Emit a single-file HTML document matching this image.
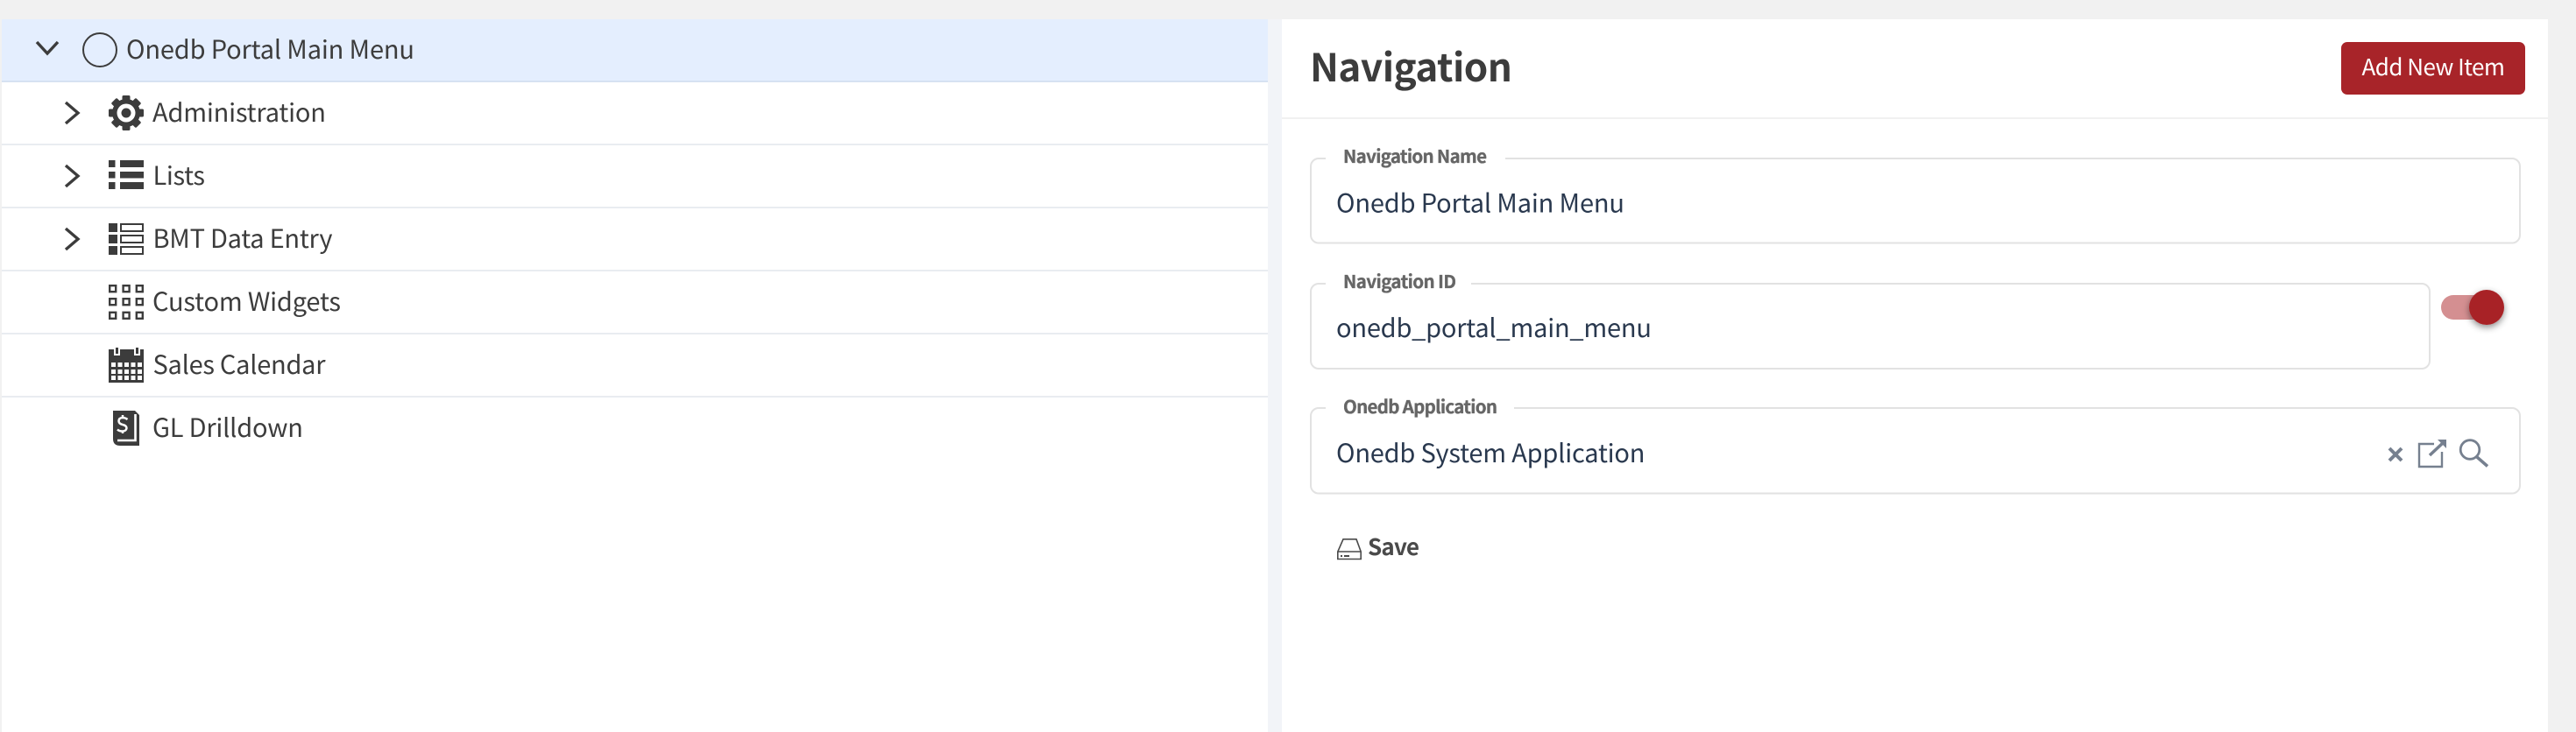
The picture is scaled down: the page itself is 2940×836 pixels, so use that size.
<!DOCTYPE html>
<html lang="en"><head><meta charset="utf-8"><title>Navigation</title>
<style>
html,body{margin:0;padding:0;width:2940px;height:836px;overflow:hidden;background:#f1f1f1}
svg{display:block}
text{font-family:"Noto Sans CJK JP","Liberation Sans",sans-serif;font-kerning:normal}
.m{font-size:29px;fill:#3c3c3c}
.v{font-size:29px;fill:#29384e}
.l{font-size:20.5px;font-weight:700;fill:#666;stroke:#666;stroke-width:.35px}
</style></head><body>
<svg xmlns="http://www.w3.org/2000/svg" width="2940" height="836" viewBox="0 0 2940 836">
<!-- panels -->
<rect x="2" y="22" width="1445" height="814" fill="#fff"/>
<rect x="1447" y="22" width="16" height="814" fill="#f2f4f8"/>
<rect x="1463" y="22" width="1445" height="814" fill="#fff"/>
<!-- tree rows -->
<rect x="2" y="22" width="1445" height="72" fill="#e4eefe"/>
<rect x="2" y="92" width="1445" height="2" fill="#d6e2f2"/>
<g fill="#e9ecf1">
<rect x="2" y="164" width="1445" height="2"/><rect x="2" y="236" width="1445" height="2"/>
<rect x="2" y="308" width="1445" height="2"/><rect x="2" y="380" width="1445" height="2"/>
<rect x="2" y="452" width="1445" height="2"/>
</g>
<!-- chevrons -->
<g fill="none" stroke="#3c3c3c" stroke-width="3.4">
<path d="M42 48 54 61 66 48"/>
<path d="M75 117 89 129 75 141"/>
<path d="M75 189 89 201 75 213"/>
<path d="M75 261 89 273 75 285"/>
</g>
<circle cx="114" cy="57" r="19" fill="none" stroke="#3c3c3c" stroke-width="2"/>
<!-- gear -->
<g fill="#3c3c3c" transform="translate(144 129)">
<circle r="16"/>
<rect x="-4.5" y="-20" width="9" height="40" rx="1.5"/>
<rect x="-4.5" y="-20" width="9" height="40" rx="1.5" transform="rotate(45)"/>
<rect x="-4.5" y="-20" width="9" height="40" rx="1.5" transform="rotate(90)"/>
<rect x="-4.5" y="-20" width="9" height="40" rx="1.5" transform="rotate(135)"/>
<circle r="10.5" fill="#fff"/><circle r="5.5"/>
</g>
<!-- list -->
<g fill="#3c3c3c">
<rect x="124" y="183" width="7.5" height="8"/><rect x="137" y="183" width="27" height="8"/>
<rect x="124" y="196" width="7.5" height="7.5"/><rect x="137" y="196" width="27" height="7.5"/>
<rect x="124" y="208" width="7.5" height="8"/><rect x="137" y="208" width="27" height="8"/>
</g>
<!-- table list -->
<g fill="#3c3c3c">
<rect x="124" y="255" width="10" height="10"/><rect x="124" y="268" width="10" height="10"/><rect x="124" y="281" width="10" height="10"/>
</g>
<g fill="none" stroke="#3c3c3c" stroke-width="2">
<rect x="138" y="256" width="25" height="8"/><rect x="138" y="269" width="25" height="8"/><rect x="138" y="282" width="25" height="8"/>
</g>
<!-- widgets -->
<g fill="none" stroke="#3c3c3c" stroke-width="2.4">
<rect x="125.2" y="326.2" width="7" height="7"/><rect x="140.6" y="326.2" width="7" height="7"/><rect x="155.800" y="326.2" width="7" height="7"/>
<rect x="125.2" y="341.2" width="7" height="7"/><rect x="140.6" y="341.2" width="7" height="7"/><rect x="155.800" y="341.2" width="7" height="7"/>
<rect x="125.2" y="356.800" width="7" height="7"/><rect x="140.6" y="356.800" width="7" height="7"/><rect x="155.800" y="356.800" width="7" height="7"/>
</g>
<!-- calendar -->
<rect x="124" y="399" width="40" height="38" fill="#3c3c3c"/>
<g fill="#fff">
<rect x="130" y="397" width="2" height="9"/><rect x="130" y="404" width="7" height="2"/><rect x="135" y="397" width="2" height="9"/>
<rect x="153" y="397" width="2" height="9"/><rect x="153" y="404" width="7" height="2"/><rect x="158" y="397" width="2" height="9"/>
<rect x="127" y="414" width="5" height="5"/><rect x="134.5" y="414" width="5" height="5"/><rect x="142" y="414" width="5" height="5"/><rect x="149.5" y="414" width="5" height="5"/><rect x="157" y="414" width="5" height="5"/>
<rect x="127" y="422" width="5" height="5"/><rect x="134.5" y="422" width="5" height="5"/><rect x="142" y="422" width="5" height="5"/><rect x="149.5" y="422" width="5" height="5"/><rect x="157" y="422" width="5" height="5"/>
<rect x="127" y="429" width="5" height="5"/><rect x="134.5" y="429" width="5" height="5"/><rect x="142" y="429" width="5" height="5"/><rect x="149.5" y="429" width="5" height="5"/><rect x="157" y="429" width="5" height="5"/>
</g>
<rect x="132" y="397" width="3" height="7" fill="#3c3c3c"/><rect x="155" y="397" width="3" height="7" fill="#3c3c3c"/>
<!-- document -->
<path d="M129 469H154L159 474V509H137Q129 509 129 501Z" fill="#3c3c3c"/>
<path d="M134 503H154.5V473" fill="none" stroke="#fff" stroke-width="2.6"/>
<path d="M145.500 479Q143 477 139.500 477Q135.500 477.500 135.500 481Q135.800 484 140 485Q144.500 486 144.500 489Q144 492.500 139.500 492.500Q136 492.500 134 490.500M140 474V477M140 492.500V495" fill="none" stroke="#fff" stroke-width="2.500"/>
<!-- tree labels -->
<text class="m" x="144" y="67" textLength="329">Onedb Portal Main Menu</text>
<text class="m" x="174" y="139" textLength="198">Administration</text>
<text class="m" x="174.500" y="211" textLength="59.500">Lists</text>
<text class="m" x="174.500" y="283" textLength="205">BMT Data Entry</text>
<text class="m" x="174" y="355" textLength="215">Custom Widgets</text>
<text class="m" x="174.500" y="427" textLength="197">Sales Calendar</text>
<text class="m" x="174" y="499" textLength="172">GL Drilldown</text>
<!-- right header -->
<rect x="1463" y="134" width="1445" height="2" fill="#f1f1f1"/>
<text x="1495" y="93" textLength="231" font-size="44" font-weight="700" fill="#3c3c3c">Navigation</text>
<rect x="2672" y="48" width="210" height="60" rx="7" fill="#a82429"/>
<text x="2695.500" y="86" textLength="163.500" font-size="26" fill="#fff">Add New Item</text>
<!-- fields -->
<g fill="#fff" stroke="#e2e2e2" stroke-width="2">
<rect x="1496" y="181" width="1380" height="96.500" rx="9"/>
<rect x="1496" y="324" width="1277" height="97" rx="9"/>
<rect x="1496" y="466" width="1380" height="97.500" rx="9"/>
</g>
<g fill="#fff">
<rect x="1513" y="176" width="205" height="10"/>
<rect x="1513" y="319" width="166" height="10"/>
<rect x="1513" y="461" width="215" height="10"/>
</g>
<text class="l" x="1533" y="186" textLength="164">Navigation Name</text>
<text class="l" x="1533" y="329" textLength="129">Navigation ID</text>
<text class="l" x="1533" y="472" textLength="176">Onedb Application</text>
<text class="v" x="1525" y="242.500" textLength="329">Onedb Portal Main Menu</text>
<text class="v" x="1525" y="385" textLength="360">onedb_portal_main_menu</text>
<text class="v" x="1525" y="528" textLength="352.500">Onedb System Application</text>
<!-- toggle -->
<defs><filter id="s" x="-50%" y="-50%" width="200%" height="200%"><feDropShadow dx="0" dy="3" stdDeviation="4" flood-color="#000" flood-opacity=".45"/></filter></defs>
<rect x="2786" y="337" width="56" height="28" rx="14" fill="#d48f91"/>
<circle cx="2838" cy="351" r="20" fill="#a82428" filter="url(#s)"/>
<!-- field icons -->
<g fill="none" stroke="#76808f">
<path d="M2727 512 2741 526M2741 512 2727 526" stroke-width="4"/>
<path d="M2787 516V533H2761V507H2778" stroke-width="2.400"/>
<path d="M2773 520 2789 505" stroke-width="3.500"/>
<circle cx="2819" cy="513.500" r="10.800" stroke-width="2.800"/>
<path d="M2827 522 2839 532.500" stroke-width="3.500"/>
</g>
<path d="M2792 502V512L2782 502Z" fill="#76808f"/>
<!-- save -->
<g fill="none" stroke="#4a4a4a" stroke-width="1.600">
<path d="M1533 615.800H1548L1553.200 630V638.500H1526.800V630Z"/>
<path d="M1526.800 630H1553.200"/>
</g>
<rect x="1530" y="634" width="2" height="2" fill="#4a4a4a"/><rect x="1534" y="634" width="6" height="2" fill="#4a4a4a"/>
<text x="1561" y="634" textLength="59" font-size="26" font-weight="700" fill="#4a4a4a">Save</text>
</svg>
</body></html>
